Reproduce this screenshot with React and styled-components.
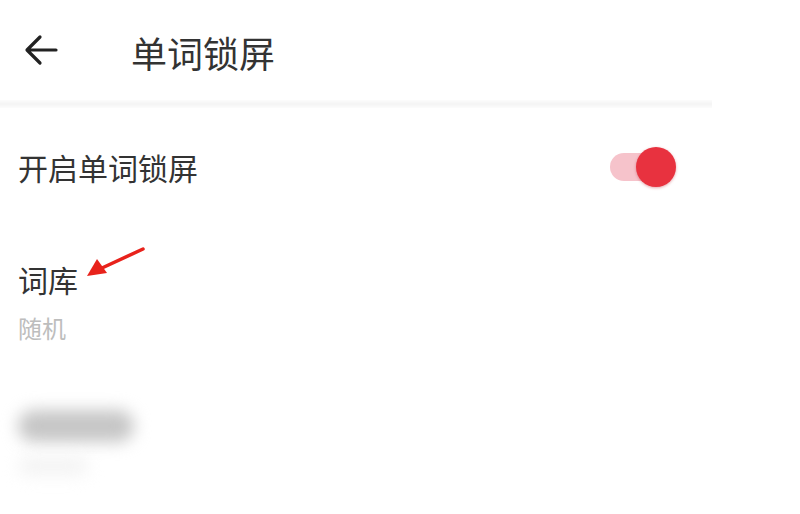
import React from "react";
import styled, { createGlobalStyle } from "styled-components";

const Global = createGlobalStyle`
  html, body { margin: 0; padding: 0; background: #fff; }
  body { font-family: "Noto Sans CJK SC", "Noto Sans", sans-serif; }
`;

const Page = styled.div`
  position: relative;
  width: 800px;
  height: 514px;
  overflow: hidden;
  background: #fff;
  display: flex;
  flex-direction: column;
`;

const Header = styled.div`
  height: 100px;
  display: flex;
  align-items: center;
  padding-left: 22px;
  box-sizing: border-box;
`;

const BackButton = styled.div`
  width: 38px;
  height: 38px;
  display: flex;
  align-items: center;
  justify-content: center;
  margin-right: 71px;
`;

const Title = styled.h1`
  margin: 0;
  font-size: 36px;
  font-weight: 400;
  color: #333;
  line-height: 1;
  margin-top: 4px;
`;

const Divider = styled.div`
  width: 712px;
  height: 8px;
  background: linear-gradient(#fcfcfc, #f4f4f4 50%, #fcfcfc);
`;

const Row = styled.div`
  display: flex;
  align-items: center;
  justify-content: space-between;
  padding: 0 18px;
  width: 712px;
  box-sizing: border-box;
  height: 118px;
`;

const Stack = styled.div`
  display: flex;
  flex-direction: column;
  align-items: flex-start;
  padding: ${(p) => p.$pt}px 18px 0;
  width: 712px;
  box-sizing: border-box;
  height: ${(p) => p.$h}px;
`;

const Label = styled.div`
  font-size: 30px;
  color: #333;
  line-height: 1;
`;

const Sub = styled.div`
  font-size: 24px;
  color: #bdbdbd;
  line-height: 1;
  margin-top: 22px;
`;

const Switch = styled.div`
  position: relative;
  width: 66px;
  height: 40px;
  margin-right: 18px;
`;

const Track = styled.div`
  position: absolute;
  left: 0;
  top: 6px;
  width: 58px;
  height: 28px;
  border-radius: 14px;
  background: #f6c3cb;
`;

const Knob = styled.div`
  position: absolute;
  right: 0;
  top: 0;
  width: 40px;
  height: 40px;
  border-radius: 50%;
  background: #e8323f;
  box-shadow: 0 1px 3px rgba(180, 0, 20, 0.35);
`;

const BlurBar = styled.div`
  width: ${(p) => p.$w}px;
  height: ${(p) => p.$hh}px;
  border-radius: 20px;
  background: ${(p) => p.$c};
  filter: blur(8px);
  margin-top: ${(p) => p.$mt}px;
`;

const Annotation = styled.svg`
  position: absolute;
  left: 82px;
  top: 244px;
`;

export default function App() {
  return (
    <Page>
      <Global />
      <Header>
        <BackButton>
          <svg width="36" height="36" viewBox="0 0 36 36">
            <path
              d="M33 18H5M17 5L4 18l13 13"
              fill="none"
              stroke="#222"
              strokeWidth="3.2"
              strokeLinecap="round"
              strokeLinejoin="round"
            />
          </svg>
        </BackButton>
        <Title>单词锁屏</Title>
      </Header>
      <Divider />
      <Row>
        <Label>开启单词锁屏</Label>
        <Switch>
          <Track />
          <Knob />
        </Switch>
      </Row>
      <Stack $pt={38} $h={140}>
        <Label>词库</Label>
        <Sub>随机</Sub>
      </Stack>
      <Stack $pt={0} $h={148}>
        <BlurBar $w={116} $hh={32} $c="#c6c6c6" $mt={44} />
        <BlurBar $w={70} $hh={20} $c="#f4f4f4" $mt={14} />
      </Stack>
      <Annotation width="66" height="38" viewBox="0 0 66 38">
        <path d="M61 5 L20 24" stroke="#e8221b" strokeWidth="3.5" strokeLinecap="round" />
        <path d="M5 32 L15 15 L25 29 Z" fill="#e8221b" />
      </Annotation>
    </Page>
  );
}
